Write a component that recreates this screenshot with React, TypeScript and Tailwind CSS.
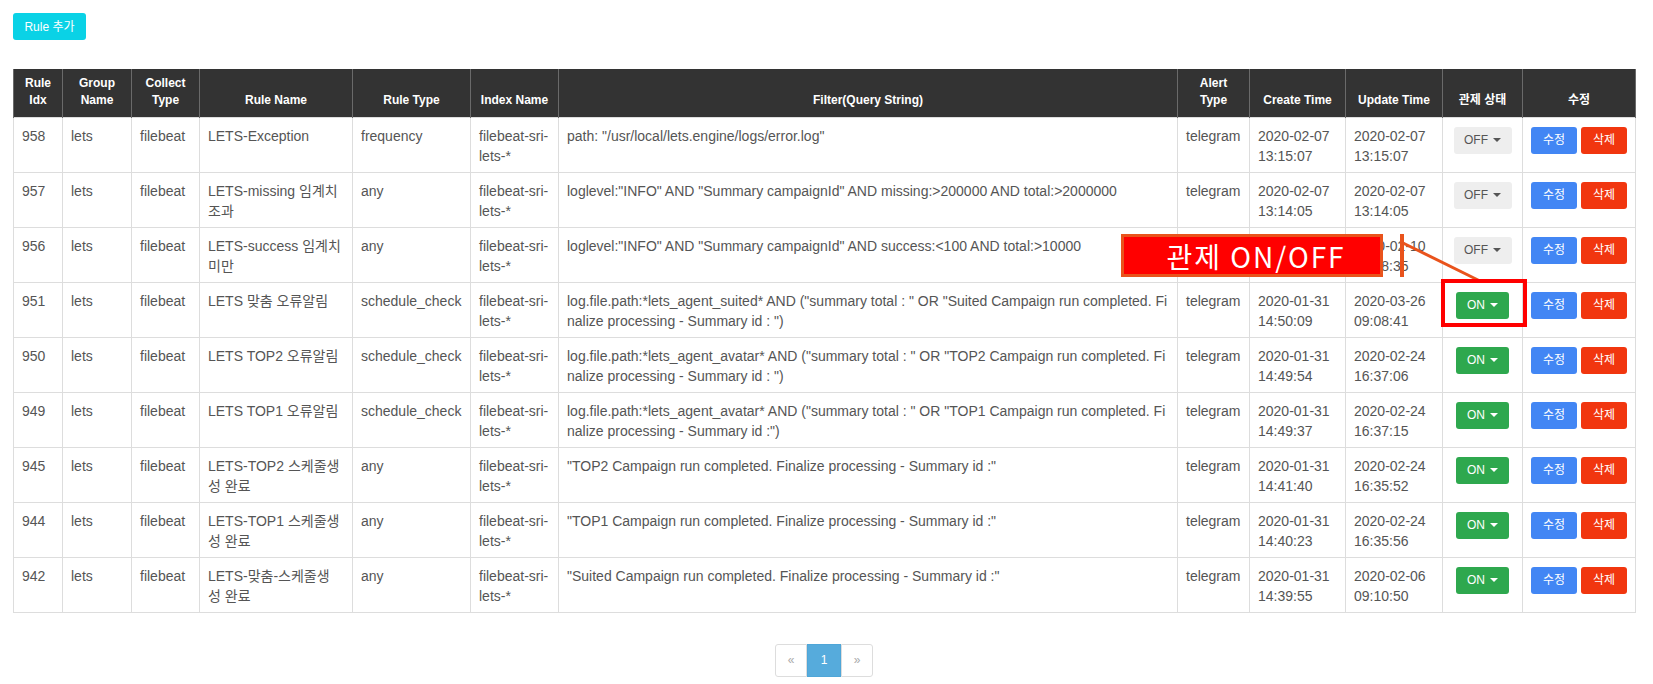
import React from "react";

type Row = {
  idx: string;
  name: string[];
  type: string;
  filter: string[];
  create: string[];
  update: string[];
  on: boolean;
};

const rows: Row[] = [
  { idx: "958", name: ["LETS-Exception"], type: "frequency", filter: ['path: "/usr/local/lets.engine/logs/error.log"'], create: ["2020-02-07", "13:15:07"], update: ["2020-02-07", "13:15:07"], on: false },
  { idx: "957", name: ["LETS-missing 임계치", "조과"], type: "any", filter: ['loglevel:"INFO" AND "Summary campaignId" AND missing:>200000 AND total:>2000000'], create: ["2020-02-07", "13:14:05"], update: ["2020-02-07", "13:14:05"], on: false },
  { idx: "956", name: ["LETS-success 임계치", "미만"], type: "any", filter: ['loglevel:"INFO" AND "Summary campaignId" AND success:<100 AND total:>10000'], create: ["2020-02-07", "13:12:38"], update: ["2020-02-10", "10:58:35"], on: false },
  { idx: "951", name: ["LETS 맞춤 오류알림"], type: "schedule_check", filter: ['log.file.path:*lets_agent_suited* AND ("summary total : " OR "Suited Campaign run completed. Fi', 'nalize processing - Summary id : ")'], create: ["2020-01-31", "14:50:09"], update: ["2020-03-26", "09:08:41"], on: true },
  { idx: "950", name: ["LETS TOP2 오류알림"], type: "schedule_check", filter: ['log.file.path:*lets_agent_avatar* AND ("summary total : " OR "TOP2 Campaign run completed. Fi', 'nalize processing - Summary id : ")'], create: ["2020-01-31", "14:49:54"], update: ["2020-02-24", "16:37:06"], on: true },
  { idx: "949", name: ["LETS TOP1 오류알림"], type: "schedule_check", filter: ['log.file.path:*lets_agent_avatar* AND ("summary total : " OR "TOP1 Campaign run completed. Fi', 'nalize processing - Summary id :")'], create: ["2020-01-31", "14:49:37"], update: ["2020-02-24", "16:37:15"], on: true },
  { idx: "945", name: ["LETS-TOP2 스케줄생", "성 완료"], type: "any", filter: ['"TOP2 Campaign run completed. Finalize processing - Summary id :"'], create: ["2020-01-31", "14:41:40"], update: ["2020-02-24", "16:35:52"], on: true },
  { idx: "944", name: ["LETS-TOP1 스케줄생", "성 완료"], type: "any", filter: ['"TOP1 Campaign run completed. Finalize processing - Summary id :"'], create: ["2020-01-31", "14:40:23"], update: ["2020-02-24", "16:35:56"], on: true },
  { idx: "942", name: ["LETS-맞춤-스케줄생", "성 완료"], type: "any", filter: ['"Suited Campaign run completed. Finalize processing - Summary id :"'], create: ["2020-01-31", "14:39:55"], update: ["2020-02-06", "09:10:50"], on: true },
];

const Lines = ({ lines }: { lines: string[] }) => (
  <>
    {lines.map((l, i) => (
      <div key={i} className="whitespace-nowrap">
        {l}
      </div>
    ))}
  </>
);

const Caret = () => (
  <span className="ml-[5px] inline-block h-0 w-0 border-x-[4px] border-t-[4px] border-x-transparent border-t-current align-middle" />
);

const th =
  "border-x border-[#6a6a6a] px-2 pb-[8px] align-bottom text-center text-[12px] font-bold leading-[17px] text-white";
const td = "border border-[#dddddd] px-2 pt-[8px] align-top";

export default function App() {
  return (
    <div
      className="relative h-[684px] w-[1653px] overflow-hidden bg-white text-[14px] text-[#555555]"
      style={{ fontFamily: '"Liberation Sans", Arial, "Noto Sans CJK KR", sans-serif' }}
    >
      <div className="ml-[13px] w-[1622px] pt-[13px]">
        <button className="block h-[27px] w-[73px] rounded-[3px] bg-[#0ad2e6] text-[12px] text-white">
          Rule 추가
        </button>

        <table className="mt-[29px] w-[1622px] table-fixed border-collapse leading-[20px]">
          <colgroup>
            <col className="w-[49px]" />
            <col className="w-[69px]" />
            <col className="w-[68px]" />
            <col className="w-[153px]" />
            <col className="w-[118px]" />
            <col className="w-[88px]" />
            <col className="w-[619px]" />
            <col className="w-[72px]" />
            <col className="w-[96px]" />
            <col className="w-[97px]" />
            <col className="w-[80px]" />
            <col className="w-[113px]" />
          </colgroup>
          <thead>
            <tr className="h-[48px] bg-[#333333]">
              <th className={th}>Rule<br />Idx</th>
              <th className={th}>Group<br />Name</th>
              <th className={th}>Collect<br />Type</th>
              <th className={th}>Rule Name</th>
              <th className={th}>Rule Type</th>
              <th className={th}>Index Name</th>
              <th className={th}>Filter(Query String)</th>
              <th className={th}>Alert<br />Type</th>
              <th className={th}>Create Time</th>
              <th className={th}>Update Time</th>
              <th className={th}>관제 상태</th>
              <th className={th}>수정</th>
            </tr>
          </thead>
          <tbody>
            {rows.map((r) => (
              <tr key={r.idx} className="h-[55px]">
                <td className={td}>{r.idx}</td>
                <td className={td}>lets</td>
                <td className={td}>filebeat</td>
                <td className={td}><Lines lines={r.name} /></td>
                <td className={td}>{r.type}</td>
                <td className={td}><Lines lines={["filebeat-sri-", "lets-*"]} /></td>
                <td className={td}><Lines lines={r.filter} /></td>
                <td className={td}>telegram</td>
                <td className={td}><Lines lines={r.create} /></td>
                <td className={td}><Lines lines={r.update} /></td>
                <td className={`${td} text-center`}>
                  <div className="pt-px">
                    {r.on ? (
                      <span className="inline-flex h-[27px] w-[53px] items-center justify-center rounded-[3px] bg-[#2ea84e] text-[12px] text-white">
                        ON
                        <Caret />
                      </span>
                    ) : (
                      <span className="inline-flex h-[27px] w-[58px] items-center justify-center rounded-[3px] bg-[#eeeeee] text-[12px] text-[#555555]">
                        OFF
                        <Caret />
                      </span>
                    )}
                  </div>
                </td>
                <td className={`${td} text-center`}>
                  <div className="flex justify-center gap-[4px] pt-px">
                    <span className="flex h-[27px] w-[46px] items-center justify-center rounded-[3px] bg-[#4286f4] text-[12px] text-white">
                      수정
                    </span>
                    <span className="flex h-[27px] w-[46px] items-center justify-center rounded-[3px] bg-[#f1360f] text-[12px] text-white">
                      삭제
                    </span>
                  </div>
                </td>
              </tr>
            ))}
          </tbody>
        </table>

        <div className="mt-[31px] flex justify-center">
          <div className="flex h-[33px] text-[12px]">
            <span className="flex w-[32px] items-center justify-center rounded-l-[3px] border border-[#dddddd] text-[#aaaaaa]">«</span>
            <span className="flex w-[34px] items-center justify-center border border-[#4fa6d8] bg-[#56abdc] text-white">1</span>
            <span className="flex w-[32px] items-center justify-center rounded-r-[3px] border border-[#dddddd] text-[#aaaaaa]">»</span>
          </div>
        </div>
      </div>

      {/* annotation overlay */}
      <div
        className="absolute left-[1121px] top-[234px] flex h-[43px] w-[262px] items-center justify-center border-[3px] border-[#e9531c] bg-[#ff0000] pl-[8px] text-[28px] leading-none tracking-[2px] text-white"
        style={{ fontFamily: '"Noto Sans CJK KR", "Noto Sans", sans-serif' }}
      >
        관제 ON/OFF
      </div>
      <svg className="pointer-events-none absolute left-0 top-0" width="1653" height="684">
        <line x1="1402" y1="234" x2="1402" y2="277" stroke="#e9531c" strokeWidth="4" />
        <line x1="1403" y1="243" x2="1480" y2="281" stroke="#e9531c" strokeWidth="3" />
        <rect x="1443" y="281" width="82" height="44" fill="none" stroke="#ff0000" strokeWidth="4" />
      </svg>
    </div>
  );
}
